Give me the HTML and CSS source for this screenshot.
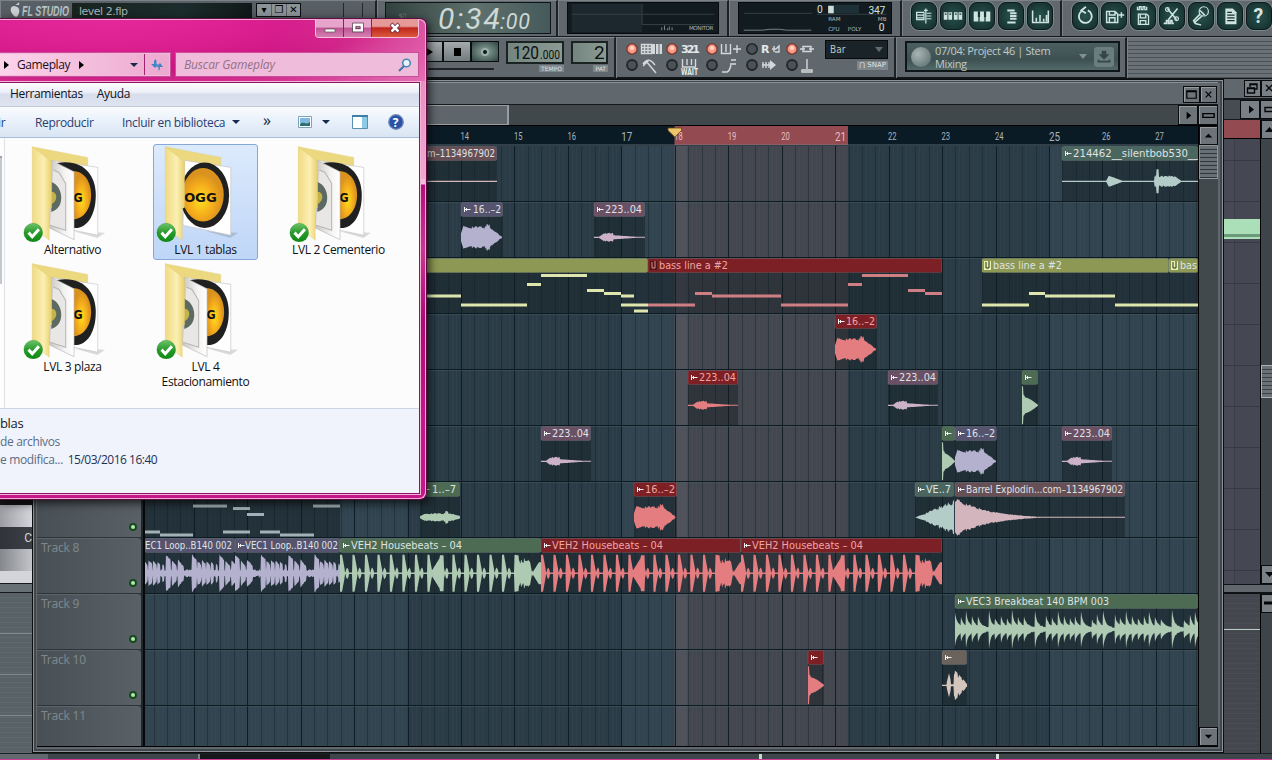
FILE: index.html
```html
<!DOCTYPE html>
<html lang="es">
<head>
<meta charset="utf-8">
<title>FL Studio - level 2.flp</title>
<link rel="stylesheet" href="styles.css">
</head>
<body>
<svg class="defs" aria-hidden="true">
  <defs>
    <linearGradient id="flap" x1="0" x2="1"><stop offset="0" stop-color="#f0da84"/><stop offset=".6" stop-color="#fbefb2"/><stop offset="1" stop-color="#e8cf6c"/></linearGradient>
    <radialGradient id="gold" cx=".45" cy=".6"><stop offset="0" stop-color="#ffe01e"/><stop offset=".6" stop-color="#f5ac1c"/><stop offset="1" stop-color="#d9921e"/></radialGradient>
    <linearGradient id="green" x1="0" y1="0" x2="0" y2="1"><stop offset="0" stop-color="#6cc46a"/><stop offset=".5" stop-color="#2a9a2c"/><stop offset="1" stop-color="#0c8a12"/></linearGradient>
    <linearGradient id="sheet" x1="0" x2="1"><stop offset="0" stop-color="#c9c5c2"/><stop offset=".6" stop-color="#f3f2f1"/><stop offset="1" stop-color="#fff"/></linearGradient>
    <symbol id="back" viewBox="0 0 250 290">
      <path d="M150 258L245 262 222 278z" fill="#0002"/>
      <path d="M27 5L193 37V72L85 60z" fill="#ecd97f" stroke="#dcc86c"/>
      <path d="M85 46L223 67V270L80 240z" fill="#fff" stroke="#c4c4c4" stroke-width="2"/>
    </symbol>
    <symbol id="front" viewBox="0 0 250 290">
      <path d="M27 5L85 50 85 187 78 190V285L27 245z" fill="url(#flap)" stroke="#dfc86a"/>
      <circle cx="30" cy="262" r="28" fill="url(#green)" stroke="#14801a"/>
      <path d="M16 262l11 12 20-22" fill="none" stroke="#fff" stroke-width="9"/>
    </symbol>
    <symbol id="folder-many" viewBox="0 0 250 290">
      <use href="#back"/>
      <path d="M100 54C180 40 217 90 217 150S190 252 150 248z" fill="#202021"/>
      <path d="M152 78C190 82 203 120 203 150S188 218 152 222z" fill="url(#gold)"/>
      <text x="150" y="170" class="ogg" textLength="28" lengthAdjust="spacingAndGlyphs">G</text>
      <path d="M85 46L152 80V283L78 248z" fill="url(#sheet)" stroke="#bbb" stroke-width="2"/>
      <path d="M90 75L107 82 127 115V255L80 240" fill="#e9e7e5" stroke="#b8b6b3" stroke-width="3"/>
      <path d="M84 110c38 15 42 80 0 90v-16c-12-8 14-20 0-44z" fill="#5c6a61"/>
      <path d="M84 140c18 0 22 25 0 38z" fill="#c3b34b"/>
      <use href="#front"/>
    </symbol>
    <symbol id="folder-one" viewBox="0 0 250 290">
      <use href="#back"/>
      <ellipse cx="145" cy="150" rx="73" ry="98" fill="#202021"/>
      <ellipse cx="140" cy="149" rx="62" ry="80" fill="url(#gold)"/>
      <text x="83" y="169" class="ogg" textLength="98" lengthAdjust="spacingAndGlyphs">OGG</text>
      <use href="#front"/>
    </symbol>
  </defs>
</svg>

<div class="desktop">
  <header class="toolbar">
    <div class="row row-top">
      <div class="cell brand">
        <svg class="fruit" viewBox="0 0 12 17"><path d="M5 4C0 4 0 9 2 12s5 6 7 2 2-9-4-10zM6 3L10 0v3z" fill="#c9d0d2"/></svg>
        <svg class="logo" viewBox="0 0 50 18"><text x="0" y="14.500" textLength="47" lengthAdjust="spacingAndGlyphs">FL STUDIO</text></svg>
        <span class="project">level 2.flp</span>
        <span class="mini"><i>▾</i><i>❐</i><i>✕</i></span>
        <span class="ticks"></span>
      </div>
      <div class="cell"><svg class="lcd" viewBox="0 0 164 32"><text x="8" y="16" class="lcd-tiny">s▯</text><text x="50" y="28" class="time" textLength="66">0:34</text><text x="116" y="28" class="time small" textLength="32">:00</text></svg></div>
      <div class="cell monitor-cell"><svg class="screen" viewBox="0 0 154 32"><path d="M1 1h75v30H1z" fill="#1d282e"/><path d="M76 1v22M76 12h77M1 12h75M76 23h77" stroke="#354249" stroke-width="1"/><path d="M97 29v-3m3 3v-5m3 5v-2m2 2v-4m3 4v-3" stroke="#829097"/><text x="126" y="29" class="pixel" textLength="26">MONITOR</text></svg></div>
      <div class="cell monitor-cell"><svg class="screen" viewBox="0 0 154 32"><path d="M1 11h73M79 12h74" stroke="#354249"/><path d="M1 29h20l8-1h10l8 1h26" stroke="#7b898d" fill="none"/><text x="79" y="11" class="num">0</text><path d="M91 2h33v9h-33z" fill="#1e3038"/><path d="M91 3h6v8h-6z" fill="#cfdcd9"/><text x="134" y="12" class="num" textLength="18">347</text><text x="91" y="19" class="pixel">RAM</text><text x="144" y="19" class="pixel">MB</text><text x="91" y="30" class="pixel">CPU</text><text x="112" y="30" class="pixel">POLY</text><text x="145" y="30" class="num">0</text></svg></div>
      <div class="cell buttons">
        <svg class="rb" viewBox="0 0 26 28"><path d="M5 10h8v8H5zM5 13h8M5 16h8M15 6v16M13 8h4M16 11h5M16 14h5M16 17h5"/></svg>
        <svg class="rb" viewBox="0 0 26 28"><path class="f" d="M3 10h4v8H3zM8 10h4v8H8zM14 10h4v8h-4zM19 10h4v8h-4z"/><path d="M4 12h2M9 12h2M15 12h2M20 12h2" stroke="#16332f"/></svg>
        <svg class="rb" viewBox="0 0 26 28"><path class="f" d="M4 9h5v11H4zM10.500 9h5v11h-5zM17 9h5v11h-5z"/><path d="M9.700 9v6M16.300 9v6" stroke="#16332f" stroke-width="2.400"/></svg>
        <svg class="rb" viewBox="0 0 26 28"><path d="M9 8h8M12 11h7M12 14h7M12 17h7M9 21h9" stroke-width="2"/></svg>
        <svg class="rb" viewBox="0 0 26 28"><path d="M5 8v13h17V8M9 20v-4M13 20v-7M17 20v-3M20 20v-7" stroke-width="1.7"/></svg>
      </div>
      <div class="cell buttons">
        <svg class="rb" viewBox="0 0 26 28"><path d="M9 9a7 7 0 1 0 7-1M14 4l-5 4 5 3" stroke-width="2"/></svg>
        <svg class="rb" viewBox="0 0 26 28"><path d="M5 9h9l3 3v9H5zM8 9v4h6V9M8 21v-5h6v5M18 13h6M21 10v6" stroke-width="1.6"/></svg>
        <svg class="rb" viewBox="0 0 26 28"><path d="M7 4v3h2V4h2v3h2V4h2v3h2V4M8 12h9l2 2v9H8zM10 12v4h6v-4M10 23v-4h6v4" stroke-width="1.4"/></svg>
        <svg class="rb" viewBox="0 0 26 28"><path d="M8 6l10 12M19 6L9 18M4 22h3v-3h2v3h2v-3h2v3h2" stroke-width="1.7"/><circle cx="8" cy="7" r="2"/><circle cx="18" cy="17" r="2"/></svg>
        <svg class="rb" viewBox="0 0 26 28"><circle cx="16" cy="9" r="5"/><path d="M12 8l5 5M12 12L5 19l1 2 8-7M6 21c2 3 5 1 7 3" stroke-width="1.7"/></svg>
        <svg class="rb" viewBox="0 0 26 28"><path class="f" d="M8 6h8l4 4v13H8z"/><path d="M10 10h5M10 13h8M10 16h8M10 19h8" stroke="#16332f"/></svg>
        <svg class="rb" viewBox="0 0 26 28"><text x="7" y="22" class="q">?</text></svg>
      </div>
    </div>
    <div class="row row-low">
      <div class="cell transport">
        <span class="btn play"><svg viewBox="0 0 12 12"><path d="M2 1l8 5-8 5z"/></svg></span><span class="btn stop"><b></b></span><span class="btn rec"><b></b></span>
        <div class="meter"><svg class="readout" viewBox="0 0 54 19"><text x="5" y="16" class="seg" textLength="26" lengthAdjust="spacingAndGlyphs">120</text><text x="32" y="16" class="seg s" textLength="20" lengthAdjust="spacingAndGlyphs">.000</text></svg><small>TEMPO</small></div>
        <div class="meter"><svg class="readout pat" viewBox="0 0 33 19"><text x="21" y="16" class="seg">2</text></svg><small>PAT</small></div>
        <span class="slider"></span>
      </div>
      <div class="cell switches">
        <svg class="leds" id="leds" viewBox="0 0 200 38">
          <g class="icons">
            <path d="M17.500 4.500h10v9h-10zM17 7.500h10M17 10.500h10M20.500 5v8M24 5v8"/>
            <path d="M97.500 4v9.500h9V4M102 4v8M109 9h8M113 5v8"/>
            <path d="M151 12h4V6l-3 3M148 9h4M150 6v6"/>
            <path d="M179 6.500h8v5h-8zM176 9h5M185 9h5"/>
            <path d="M19 24c5-7 9-3 12 1M22 21l10 12M19 26l6-6" stroke-width="2.200"/>
            <path d="M58.500 19v8h13v-8M63 19v6M67.500 19v6"/>
            <path d="M98 32h5c3-1 3-4 4-7M106 24h6M107 20h5" stroke-width="2.200"/>
            <path d="M139 22v6M142 22v6M145 22v6M138 25h10" /><path class="solid" d="M146 20l6 5-6 5z"/>
            <path d="M183 19v10M178 30h10v2h-10z" stroke-width="2"/>
          </g>
          <path class="solid" d="M28 4h3v10h-3zM32 4h2.500v10H32zM35.500 4H38v10h-2.500z"/>
          <text x="57" y="13" class="bt" textLength="19">321</text><text x="137" y="13" class="bt">R</text><text x="57" y="35" class="bt w" textLength="17" lengthAdjust="spacingAndGlyphs">WAIT</text>
        </svg>
        <div class="snap"><span class="dropdown">Bar<i></i></span><small>⋂ SNAP</small></div>
      </div>
      <div class="cell newscell"><div class="news"><b class="orb"></b><span>07/04: Project 46 | Stem<br>Mixing</span><i></i><svg viewBox="0 0 22 22"><path d="M11 4v5" stroke="#35474a" stroke-width="5"/><path d="M5 8h12l-6 6z" fill="#35474a"/><path d="M5 14v2h12v-2" stroke="#35474a" stroke-width="2" fill="none"/></svg></div></div>
      <div class="cell hatch"></div>
    </div>
  </header>

  <section class="window keys-window">
    <div class="k shade"></div><div class="k white"></div><div class="k note">C</div><div class="k white2"></div><div class="k split"></div><div class="k lanes"></div>
  </section>

  <section class="window side-window">
    <div class="side-title"><span><svg viewBox="0 0 15 15"><path d="M5 6V3h7v5h-3M2.500 7h7v5h-7zM2.500 7.500h7M5 3.500h7"/></svg></span><span><svg viewBox="0 0 15 15"><path d="M4 4l6 6M10 4l-6 6"/></svg></span></div>
    <div class="side-nav"><span><svg viewBox="0 0 15 15"><path class="solid-dark" d="M6 3.500l5 4-5 4z"/></svg></span><span><svg viewBox="0 0 15 15"><path d="M2 5.500h11v4H2z"/></svg></span></div>
    <div class="side-body">
      <div class="side-roll"><div class="side-ruler"></div><div class="side-note"></div></div>
      <div class="side-scroll"><span><svg viewBox="0 0 15 15"><path class="solid-dark" d="M3 10l4.500-5 4.500 5z"/></svg></span><b></b><span><svg viewBox="0 0 15 15"><path class="solid-dark" d="M3 5l4.500 5 4.500-5z"/></svg></span></div>
    </div>
    <div class="side-split"></div>
    <div class="side-low"><div class="side-lane"></div><div class="side-scroll"><span><svg viewBox="0 0 15 15"><path d="M2 7h11" stroke-width="3"/></svg></span></div></div>
  </section>

  <section class="window playlist">
    <div class="pl-title"><span class="sq"><svg viewBox="0 0 16 16"><path d="M3 4h10v8H3zM3 5h10" fill="none" stroke="#000" stroke-width="1.300"/></svg></span><span class="sq"><svg viewBox="0 0 16 16"><path d="M5 5l6 6M11 5l-6 6" stroke="#000" stroke-width="1.300"/></svg></span></div>
    <div class="pl-nav"><div class="thumb"></div><div class="track"></div><span class="sq"><svg viewBox="0 0 16 16"><path d="M6 4l5 4-5 4z"/></svg></span><span class="sq"><svg viewBox="0 0 16 16"><path d="M2 6h12v4H2z" fill="none" stroke="#000" stroke-width="1.500"/></svg></span></div>
    <div class="pl-body">
      <div class="heads" id="heads"></div>
      <div class="gutter"></div>
      <div class="canvas">
        <svg class="ruler" id="ruler" viewBox="145 126 1053 20"></svg>
        <svg class="grid" id="grid" viewBox="145 146 1053 600"></svg>
      </div>
      <div class="pl-scroll"><span class="sq"><svg viewBox="0 0 16 16"><path d="M4 10l4-4 4 4z"/></svg></span><b></b><u></u><span class="sq"><svg viewBox="0 0 16 16"><path d="M4 6l4 4 4-4z"/></svg></span></div>
    </div>
  </section>

  <div class="bottom-strip"><span></span><span class="dark"></span><i></i><em></em></div>

  <section class="window explorer">
    <div class="ex-title"><div class="caption"><span class="min"><svg viewBox="0 0 16 12"><path d="M3 7h10v3H3z" fill="#fff" stroke="#555" stroke-width=".7"/></svg></span><span class="max"><svg viewBox="0 0 16 12"><path d="M4 2.500h8v6H4z" fill="none" stroke="#fff" stroke-width="2.500"/><path d="M2.500 1h11v9h-11zM6 4.500h4v2H6z" fill="none" stroke="#444" stroke-width=".7"/></svg></span><span class="close"><svg viewBox="0 0 16 12"><path d="M4 2l8 8M12 2l-8 8" stroke="#623" stroke-width="4"/><path d="M4.500 2.500l7 7M11.500 2.500l-7 7" stroke="#fff" stroke-width="2.500"/></svg></span></div></div>
    <div class="ex-address">
      <div class="path"><i class="ra"></i><span>Gameplay</span><i class="ra"></i><i class="da"></i><b><svg viewBox="0 0 14 14"><path d="M5.500 1L4 3v3H1l4 4 3-4H6.500V3zM8.500 13l1.500-2V9h3l-3-4-4 4h2.500v1z" fill="#3f86c4"/></svg></b></div>
      <div class="search"><span>Buscar Gameplay</span><svg viewBox="0 0 14 14"><circle cx="8.500" cy="5" r="3.800" fill="#e7f4fb" stroke="#4e83b4" stroke-width="1.600"/><path d="M6 8l-5 5" stroke="#3f74a8" stroke-width="2"/></svg></div>
    </div>
    <div class="ex-inner">
      <div class="menu"><span>Herramientas</span><span>Ayuda</span></div>
      <div class="cmds"><span class="c0">ir</span><span class="c1">Reproducir</span><span class="c2">Incluir en biblioteca</span><i class="da"></i><span class="c3">»</span>
        <svg class="pic" viewBox="0 0 14 12"><path d="M.5.5h13v11H.5z" fill="#fff" stroke="#7da3bb"/><path d="M2 2h10v5H2z" fill="#7fb9e3"/><path d="M2 8c3-3 6 1 10-2v4H2z" fill="#2f6f6f"/></svg><i class="da"></i>
        <svg class="pane" viewBox="0 0 16 14"><path d="M.5.5h15v13H.5z" fill="#fff" stroke="#5b8fae"/><path d="M10 1h5v12h-5z" fill="#8ccbe5"/><path d="M0 1h16" stroke="#3f7ea6" stroke-width="2"/></svg>
        <svg class="help" viewBox="0 0 16 16"><circle cx="8" cy="8" r="7.300" fill="#2a53a8" stroke="#7a8fb8" stroke-width="1.200"/><text x="4.800" y="12.500">?</text></svg></div>
      <div class="files"><div class="navbar"></div><div class="list">
        <div class="file"><svg><use href="#folder-many"/></svg><span>Alternativo</span></div>
        <div class="file sel"><svg><use href="#folder-one"/></svg><span>LVL 1 tablas</span></div>
        <div class="file"><svg><use href="#folder-many"/></svg><span>LVL 2 Cementerio</span></div>
        <div class="file"><svg><use href="#folder-many"/></svg><span>LVL 3 plaza</span></div>
        <div class="file"><svg><use href="#folder-many"/></svg><span>LVL 4<br>Estacionamiento</span></div>
      </div></div>
      <div class="details"><p class="d1">blas</p><p class="d2">de archivos</p><p class="d3">e modifica... <b>15/03/2016 16:40</b></p></div>
    </div>
  </section>
</div>
<script src="playlist.js"></script>
</body>
</html>
```

FILE: styles.css
```css
* { box-sizing: border-box; }
body { margin: 0; background: #5d656b; font-family: "Open Sans", "Noto Sans", sans-serif; }
.defs { position: absolute; width: 0; height: 0; }
.desktop { position: relative; width: 1272px; height: 760px; overflow: hidden; background: #596167; }
.window { position: absolute; }
.ogg { font: bold 38px "DejaVu Sans", sans-serif; fill: #17130c; }

/* toolbar */
.toolbar { height: 79px; background: #60686e; border-bottom: 2px solid #111518; }
.row { display: grid; }
.row-top { height: 37px; grid-template-columns: 377px 181px 171px 173px 160px 1fr; border-bottom: 1px solid #14181b; }
.row-low { height: 40px; grid-template-columns: 616px 280px 231px 1fr; }
.cell { border-right: 2px solid #1b2024; border-top: 1px solid #7b8388; padding: 0 8px; display: flex; align-items: flex-start; box-shadow: inset 1px 0 #7b8388; }
.brand { padding: 0 0 0 10px; background: linear-gradient(#596167, #4c5358); }
.brand > * { flex: none; }
.fruit { width: 11px; height: 16px; margin-top: 1px; }
.logo { width: 50px; height: 18px; margin-left: 1px; overflow: visible; font: italic bold 14px "Liberation Sans", sans-serif; fill: #b9c3c7; }
.project { width: 180px; height: 16px; margin-top: 2px; padding-left: 7px; background: linear-gradient(90deg, #17231f, #1c2c2c 60%, #0f1818); color: #a6b3b6; font: 11px/17px "DejaVu Sans", sans-serif; letter-spacing: -.5px; }
.mini { display: flex; margin: 2px 0 0 4px; border: 1px solid #0a0d0f; }
.mini i { width: 14px; height: 12px; margin-right: 1px; background: #8a9398; font: 10px/12px "DejaVu Sans", sans-serif; text-align: center; }
.mini i:last-child { margin: 0; width: 13px; }
.ticks { width: 20px; height: 14px; margin: 2px 0 0 42px; border: solid #22282c; border-width: 0 1px; }
.lcd { flex: none; width: 166px; height: 32px; margin-top: 1px; border: 1px solid #101618; background: linear-gradient(90deg, #32423f, #5f716d 55%, #46595a); }
.lcd-tiny { font: 8px "DejaVu Sans"; fill: #748683; }
.time { font: italic 32px Roboto, sans-serif; fill: #cdd9d6; }
.time.small { font-size: 23px; }
.monitor-cell { padding-left: 9px; }
.screen { width: 154px; height: 32px; margin-top: 1px; background: #121b20; border: 1px solid #080b0d; }
.pixel { font: 6px "DejaVu Sans", sans-serif; fill: #a9b6ba; }
.num { font: 11px Roboto, sans-serif; fill: #d5e2df; }
.buttons { gap: 3px; padding: 1px 0 0 9px; }
.rb { flex: none; width: 26px; height: 28px; border-radius: 8px; background: radial-gradient(#27534e, #17322f 85%); border: 1px solid #0d1a19; box-shadow: 0 0 0 1px #77898a; fill: none; stroke: #cfe3e0; stroke-width: 1.3; }
.rb .f { fill: #cfe3e0; stroke: none; }
.q { font: bold 21px Roboto, sans-serif; fill: #d8e6e4; stroke: none; }
.cell.buttons + .buttons { border-right: 0; padding-left: 10px; }

.transport { padding: 3px 0 0 415px; position: relative; border-top-color: #818a8f; }
.btn { width: 28px; height: 21px; border: 1px solid #0b0e0f; background: linear-gradient(#a3abac, #727b7d); display: grid; place-items: center; }
.btn svg { width: 12px; }
.stop b { width: 7px; height: 8px; background: #000; }
.rec { background: radial-gradient(#8ea79f, #2f4340); }
.rec b { width: 4px; height: 4px; border-radius: 3px; background: #101817; box-shadow: 0 0 0 2px #9bb0aa; }
.meter { margin-left: 7px; display: flex; flex-direction: column; align-items: flex-end; }
.meter small, .snap small { margin-top: 1px; padding: 0 2px; background: #7e868b; color: #dde2e4; font: 6px/7px "DejaVu Sans", sans-serif; }
.readout { width: 58px; height: 23px; background: linear-gradient(90deg, #74857f, #8b9b94); border: 2px solid #1a2222; }
.readout.pat { width: 37px; }
.seg { font: 19px Roboto, sans-serif; fill: #0b1010; }
.seg.s { font-size: 13px; }
.slider { position: absolute; left: 428px; top: 30px; width: 66px; height: 2px; background: #1e2427; }
.switches { padding: 2px 0 0 8px; }
.leds { width: 200px; height: 38px; flex: none; }
.icons path { fill: none; stroke: #d3d8da; stroke-width: 1.4; }
.leds .solid { fill: #d3d8da; stroke: none; }
.bt { font: bold 11px "DejaVu Sans", sans-serif; fill: #e4e8ea; }
.bt.w { font-size: 8px; }
.snap { display: flex; flex-direction: column; align-items: flex-end; margin-left: 1px; }
.dropdown { width: 63px; height: 19px; padding: 0 4px; border: 1px solid #080a0b; background: #1a2328; color: #bac3c6; font: 10px/16px "DejaVu Sans Condensed", "DejaVu Sans", sans-serif; display: flex; justify-content: space-between; align-items: center; }
.dropdown i, .news i { border: 4px solid transparent; border-top: 5px solid #5e6b70; border-bottom: 0; }
.snap small { margin-top: 2px; font-size: 7px; line-height: 9px; }
.newscell { padding: 3px 0 0 9px; }
.news { width: 215px; height: 31px; border: 2px solid #0f1617; background: linear-gradient(#4c5f60, #3e5051 60%, #52696a); display: flex; align-items: center; color: #bfcac9; font: 11px/13px "Open Sans", sans-serif; letter-spacing: -.38px; }
.news .orb { width: 20px; height: 20px; margin: 0 4px 0 4px; border-radius: 50%; background: radial-gradient(circle at 35% 35%, #a9b5b3, #54686a); }
.news span { width: 144px; }
.news i { border-top-color: #82918f; margin-right: 7px; }
.news svg { width: 20px; height: 20px; background: #6b7d7d; border-radius: 3px; }
.hatch { border-right: 0; background: repeating-linear-gradient(#697176 0 3px, #4b5358 3px 4px); }

/* window behind, left */
.keys-window { left: 0; top: 499px; width: 32px; height: 261px; display: flex; flex-direction: column; }
.shade { height: 6px; background: #151515; }
.white { height: 22px; background: linear-gradient(90deg, #9b9da3, #d4d5db); }
.note { height: 22px; background: linear-gradient(90deg, #30343a, #3c4046); color: #ced3d6; text-align: right; font: 12px/22px Roboto, sans-serif; }
.white2 { height: 34px; background: linear-gradient(90deg, #84878b, #c2c4c9); border-bottom: 12px solid #d3d5da; }
.split { height: 10px; background: #667075; border: solid #15191b; border-width: 1px 0; }
.lanes { flex: 1; background: repeating-linear-gradient(transparent 0 40px, #7f888d 40px 41px), repeating-linear-gradient(#596267 0 4px, #5f686d 4px 5px); }

/* window behind, right */
.side-window { left: 1224px; top: 79px; width: 48px; height: 674px; display: flex; flex-direction: column; overflow: hidden; background: #60686e; }
.side-title { height: 21px; padding: 1px 0 0 20px; display: flex; border-bottom: 2px solid #15191c; }
.side-nav { height: 20px; padding-left: 16px; display: flex; background: #454d52; border-bottom: 1px solid #15191c; }
.side-window span { flex: none; width: 17px; height: 17px; background: #798187; border: 1px solid #0a0c0d; display: grid; place-items: center; overflow: hidden; }
.side-window svg { width: 15px; height: 15px; fill: none; stroke: #050607; stroke-width: 1.4; }
.side-window .solid-dark { fill: #050607; stroke: none; }
.side-window .side-nav span { width: 20px; height: 19px; }
.side-body { display: flex; height: 464px; }
.side-roll { flex: none; width: 37px; background: repeating-linear-gradient(transparent 0 40px, #373a42 40px 41px), linear-gradient(90deg, #474954 10px, #3b3e46 10px 11px, #454852 11px); border-right: 1px solid #000; }
.side-ruler { height: 19px; background: #934a50; border-bottom: 1px solid #000; }
.side-note { height: 20px; margin-top: 80px; background: linear-gradient(#aadfb8 75%, #6b9a7b 75% 88%, #aadfb8 88%); }
.side-scroll { flex: 1; display: flex; flex-direction: column; background: #3e454a; }
.side-window .side-scroll span { height: 19px; }
.side-scroll b { height: 33px; margin: 226px 0 auto; background: repeating-linear-gradient(#6a7277 0 3px, #3b4246 3px 4px); border: 1px solid #aab0b3; }
.side-split { height: 10px; background: #60686e; border: solid #101315; border-width: 1px 0 2px; }
.side-low { flex: 1; display: flex; }
.side-lane { flex: none; width: 37px; border-right: 1px solid #000; background: linear-gradient(transparent 35px, #b9cfc4 35px 36px, transparent 36px), repeating-linear-gradient(#45474f 0 4px, #4a4c55 4px 5px); }

/* playlist */
.playlist { left: 32px; top: 79px; width: 1192px; height: 674px; padding: 2px 5px 5px 4px; background: #60686e; border: 1px solid #0b0d0f; box-shadow: inset 0 0 0 1px #8a9297, inset 0 0 0 3px #41484d; display: flex; flex-direction: column; }
.sq { flex: none; width: 19px; height: 19px; display: grid; place-items: center; background: #6c7479; border: 1px solid #0a0c0d; box-shadow: inset 1px 1px #959da1; }
.sq svg { width: 15px; height: 15px; }
.pl-title { flex: none; height: 23px; display: flex; justify-content: flex-end; padding: 3px 1px 0 0; border-bottom: 1px solid #15191b; border-top: 1px solid #8a9297; }
.pl-title .sq { width: 17px; height: 17px; }
.pl-nav { flex: none; height: 21px; display: flex; background: #41484d; border-bottom: 1px solid #000; }
.thumb { width: 472px; background: #5e666b; border: 1px solid #959da1; border-right-width: 2px; }
.track { flex: 1; background: #40484c; }
.pl-nav .sq { width: 20px; height: 20px; }
.pl-body { flex: none; height: 621px; display: flex; border-bottom: 1px solid #000; }
.heads { width: 104px; padding-top: 20px; background: #3a4146; overflow: hidden; }
.head { height: 56px; padding: 1px 4px 0; border-bottom: 1px solid #2d3438; border-top: 1px solid #5d656a; border-radius: 0 4px 0 0; background: linear-gradient(90deg, #485056, #596166); color: #7d868b; font: 12px/16px "Noto Sans", sans-serif; letter-spacing: -.2px; position: relative; }
.head i { position: absolute; right: 4px; bottom: 6px; width: 8px; height: 8px; border-radius: 4px; background: #b7e5b5; border: 2.5px solid #174a1b; }
.gutter { width: 4px; background: #20282c; border-right: 2px solid #05090c; }
.canvas { width: 1053px; flex: none; display: flex; flex-direction: column; }
.ruler { flex: none; height: 20px; width: 1053px; }
.grid { flex: none; height: 600px; width: 1053px; }
.rn { font: 10px Roboto, sans-serif; fill: #aab5ba; }
.rn.big { font-size: 13px; }
.rn.on { fill: #e3bfc0; }
.ct { font: 10.5px "DejaVu Sans Condensed", "DejaVu Sans", sans-serif; }
.pl-scroll { width: 20px; border-left: 1px solid #000; display: flex; flex-direction: column; background: #41494d; }
.pl-scroll b { height: 34px; border: 1px solid #8d9599; background: repeating-linear-gradient(#687075 0 3px, #30373b 3px 4px); }
.pl-scroll u { flex: 1; }

.bottom-strip { position: absolute; left: 0; top: 753px; width: 1272px; height: 7px; display: flex; background: #3e464b; border-bottom: 1px solid #cf3a94; border-top: 1px solid #1b2022; }
.bottom-strip span { width: 200px; border-right: 2px solid #7d8589; border-left: 48px solid #626a6f; }
.bottom-strip .dark { width: 130px; border: 0; background: #15191c; }
.bottom-strip i { width: 3px; margin-left: 429px; background: #bfe0c9; }
.bottom-strip em { width: 3px; margin-left: 234px; background: #d5e5dd; }

/* explorer */
.explorer { left: 0; top: 18px; width: 427px; height: 482px; border: solid #5e0c41; border-width: 1px 1px 1px 0; border-radius: 0 7px 7px 0; box-shadow: inset -1px 1px #f4a9d5, inset -1px -1px #f4a9d5, 2px 3px 10px #000b; background: linear-gradient(100deg, transparent 60%, #f28ac322 75%, #ee91c488) 0 0 / 100% 160px no-repeat, radial-gradient(ellipse at 25% 0, #e4289b 0, #dd2091 30%, #cb1580 60%, #db51a2 100%) 0 0 / 100% 62px no-repeat, linear-gradient(#e48cbf 60px, #efc3dc 165px, #b01078 166px, #c83892 230px, #ab0c75 300px, #c3188a 400px); }
.ex-title { height: 33px; display: flex; justify-content: flex-end; padding-right: 7px; }
.caption { display: flex; height: 19px; border: 1px solid #f8c0df; border-top: 0; border-radius: 0 0 4px 4px; overflow: hidden; }
.caption span { width: 28px; display: grid; place-items: center; background: linear-gradient(#e8a5cb 45%, #bd5592 50%, #d57fb2); border-right: 1px solid #7a2a5c; }
.caption .close { width: 46px; background: linear-gradient(#e59a98 40%, #c0261c 50%, #da5a3c); border: 0; }
.caption svg { width: 16px; height: 12px; }
.ex-address { height: 30px; display: flex; gap: 6px; padding-top: 1px; }
.path, .search { height: 23px; border: 1px solid #f8b7dc; outline: 1px solid #c4529a; outline-offset: 0; display: flex; align-items: center; font-size: 12px; letter-spacing: -.4px; color: #1b1017; }
.path { width: 170px; border-left: 0; padding-left: 4px; background: linear-gradient(90deg, #fbd4ea, #eda9d0); }
.ra { border: 4px solid transparent; border-left: 5px solid #000; border-right: 0; }
.path span { margin: 0 9px 0 8px; width: 53px; }
.da { border: 4px solid transparent; border-top: 4px solid #182a4c; border-bottom: 0; }
.path .da { margin-left: 46px; }
.path b { margin-left: 6px; height: 21px; width: 25px; border-left: 1px solid #a2226e; display: grid; place-items: center; }
.path b svg { width: 14px; height: 14px; }
.search { width: 242px; padding: 0 5px 0 7px; justify-content: space-between; font-style: italic; letter-spacing: -.15px; color: #927286; background: #f0bcdb; }
.search svg { width: 14px; height: 14px; }
.ex-inner { width: 420px; height: 412px; border: 1px solid #8c1460; border-left: 0; outline: 1px solid #f7b4d8; background: #fcfcfd; display: flex; flex-direction: column; font-size: 12px; letter-spacing: -.35px; }
.menu { height: 24px; padding-left: 10px; display: flex; gap: 14px; line-height: 21px; color: #10121c; background: linear-gradient(#fdfdfe, #eceff8 40%, #d8ddec 50%, #dfe4f1); border-bottom: 1px solid #c0c8dc; }
.cmds { height: 31px; display: flex; align-items: center; color: #28406f; background: linear-gradient(#fafcfe, #e8f0fa 50%, #d9e5f3); border-bottom: 1px solid #a9bbd5; }
.c0 { width: 35px; margin-left: -2px; }
.cmds .c1 { width: 87px; margin-left: 2px; }
.c2 { width: 106px; margin-right: 4px; letter-spacing: -.3px; white-space: nowrap; }
.c3 { font-size: 16px; width: 10px; margin: -4px 25px 0 23px; color: #111c38; }
.pic { width: 14px; height: 12px; margin-right: 10px; }
.pane { width: 16px; height: 14px; margin-left: 22px; }
.help { width: 16px; height: 16px; margin-left: 20px; }
.help text { font: bold 12px "Open Sans", sans-serif; fill: #fff; }
.files { height: 271px; display: flex; border-bottom: 1px solid #ccd6e4; }
.navbar { width: 5px; border-right: 1px solid #dfe3e8; background: linear-gradient(#fff 18px, #9da1a7 18px 20px, #c4c7cb 20px 146px, #fff 146px) 0 0 / 2px 100% no-repeat; }
.list { display: grid; grid-template-columns: repeat(3, 105px); grid-auto-rows: 116px; gap: 1px 28px; padding: 6px 0 0 15px; align-content: start; }
.file { display: flex; flex-direction: column; align-items: center; white-space: nowrap; text-align: center; line-height: 15px; color: #111; border: 1px solid transparent; }
.file svg { width: 84px; height: 97px; align-self: flex-start; margin-left: 2px; flex: none; }
.file.sel { border-color: #84a9d9; border-radius: 3px; background: linear-gradient(#dceafc, #bfd6f7); }
.details { flex: 1; padding-top: 5px; background: #f0f3fb; color: #5a6c84; }
.details p { margin: 0; }
.d1 { font-size: 13px; line-height: 19px; color: #16181c; }
.d2, .d3 { line-height: 18px; }
.d3 { letter-spacing: -.35px; }
.details b { font-weight: 400; color: #1c3255; margin-left: 2px; letter-spacing: -.5px; }
```

FILE: playlist.js
```javascript
const NS = 'http://www.w3.org/2000/svg';
function add(parent, tag, attrs, text) {
  const el = document.createElementNS(NS, tag);
  for (const k in attrs) el.setAttribute(k, attrs[k]);
  if (text !== undefined) el.textContent = text;
  parent.appendChild(el);
  return el;
}
const BAR = 53.45;
const barX = n => 461 + (n - 14) * BAR;
const rowY = n => 146 + (n - 1) * 56;
const SEL = [674.5, 848];

const leds = document.getElementById('leds');
[[8, 1], [48, 1], [88, 1], [128, 0], [168, 1]].forEach(([x, on]) => {
  add(leds, 'circle', { cx: x, cy: 9, r: 5.2, fill: on ? '#ff9b84' : '#4a5257', stroke: on ? '#7a4038' : '#20262a', 'stroke-width': 1.6 });
  if (on) add(leds, 'circle', { cx: x, cy: 8, r: 2, fill: '#ffd9cc' });
  add(leds, 'circle', { cx: x, cy: 25, r: 5, fill: '#4a5257', stroke: '#20262a', 'stroke-width': 1.8 });
});

const heads = document.getElementById('heads');
for (let i = 1; i <= 11; i++) {
  const d = document.createElement('div');
  d.className = 'head';
  if (i >= 8) d.textContent = 'Track ' + i;
  d.appendChild(document.createElement('i'));
  heads.appendChild(d);
}

const ruler = document.getElementById('ruler');
add(ruler, 'rect', { x: 145, y: 126, width: 1053, height: 20, fill: '#0b1b26' });
add(ruler, 'rect', { x: SEL[0], y: 126, width: SEL[1] - SEL[0], height: 19, fill: '#934a50' });
for (let b = 14; b <= 27; b++) {
  const big = b % 4 === 1, on = b >= 18 && b <= 21;
  add(ruler, 'text', { x: b === 21 ? 835 : barX(b) + (big ? 0 : -.5), y: big ? 140.5 : 139.5, textLength: big ? 11 : 8.5, lengthAdjust: 'spacingAndGlyphs', class: 'rn' + (big ? ' big' : '') + (on ? ' on' : '') }, b);
}
add(ruler, 'path', { d: 'M145 145h1053', stroke: '#7c888e', 'stroke-width': .7 });
add(ruler, 'path', { d: 'M668 128h13.500v2.500l-6.700 6.500-6.800-6.500z', fill: '#eec567', stroke: '#5f4516', 'stroke-width': .8 });

const grid = document.getElementById('grid');
add(grid, 'rect', { x: 145, y: 146, width: 1053, height: 600, fill: '#2b3c47' });
[9, 17, 25].forEach(b => {
  const x = b === 9 ? 145 : barX(b);
  add(grid, 'rect', { x, y: 146, width: barX(b + 4) - x, height: 600, fill: '#31444f' });
});
add(grid, 'rect', { x: SEL[0], y: 146, width: SEL[1] - SEL[0], height: 600, fill: '#44474f' });
add(grid, 'rect', { x: SEL[0], y: 146, width: 13, height: 600, fill: '#4f515b' });
for (let i = -24; i < 56; i++) {
  const x = Math.round(barX(14) + i * BAR / 4) + .5;
  const major = i % 4 === 0;
  add(grid, 'path', { d: `M${x} 146v600`, stroke: major ? '#0b1a23' : '#17262f', 'stroke-width': 1, opacity: major ? .9 : .5 });
  for (let j = 1; j < 3; j++) add(grid, 'path', { d: `M${x + j * 4} 146v600`, stroke: '#4c6672', opacity: .12 });
}
for (let t = 2; t <= 11; t++) {
  add(grid, 'path', { d: `M145 ${rowY(t) - .5}h1053`, stroke: '#0c1a22' });
  add(grid, 'path', { d: `M145 ${rowY(t) + .5}h1053`, stroke: '#52656e', opacity: .35 });
}

const colors = {
  rose: ['#674f56', '#d3b6bd'], teal: ['#4a665f', '#b4ccc7'], purple: ['#55536d', '#b4b1cf'],
  mauve: ['#695065', '#ccb2c8'], red: ['#7d2025', '#e37d80'], green: ['#4d6a52', '#aecab3'],
  olive: ['#8c9853', '#dfe6ad'], brown: ['#6b625c', '#d4c6bd'], gray: ['#4d5961', '#a3b0b6']
};
const noise = i => { const v = Math.sin(Math.floor(i) * 127.1) * 43758.5453; return v - Math.floor(v); };

/* Each envelope takes a position in pixels and the clip width and returns the half height. */
const envelopes = {
  flat: () => .6,
  hit: (p, w) => p < 1.5 ? 19 : p < 3 ? 12 - p : Math.max(0, 8 * Math.cos((p / w) * 1.57) + .4),
  voice: (p, w) => { const u = p / w; return u < .06 ? 4 + u * 130 : u < .12 ? 10 + noise(p) : u < .7 ? 8.5 + noise(p) * 3 + (Math.abs(u - .64) < .04 ? 3 : 0) : Math.max(0, 9.5 * (1 - u) / .3 - noise(p)); },
  puff: (p, w) => { const u = p / w; return u < .1 ? .6 : u < .2 ? (u - .1) * 35 + .6 : u < .38 ? 3 + noise(p) * 1.6 : Math.max(.5, 3.4 * (1 - u * 1.02)); },
  shot: (p, w) => { const u = p / w; return 1 + (u < .6 ? 2.8 : 3) * Math.sin(Math.min(1, u * 5) * 1.5) * (1 - Math.pow(u, 8)) * (.7 + noise(p) * .5) + (Math.abs(u - .67) < .04 ? 2.5 : 0); },
  silent: p => p > 44 && p < 64 ? (p < 47 ? (p - 44) * 2 : Math.max(.6, 5.5 * (1 - (p - 47) / 15))) : p > 92 && p < 120 ? (p > 94 && p < 97 ? 12 : p < 113 ? 4 + noise(p) * 2 : (120 - p) * .7) : .6,
  rise: (p, w) => Math.pow(p / w, 1.1) * 13 + noise(p) * 6 * p / w,
  boom: (p, w) => Math.max(.5, 17 * Math.exp(-p / 38) - 1.5 + noise(p) * 5 * Math.exp(-p / 28)),
  loop: p => {
    const q = p % 53.5;
    const hits = [[0, 18, 5], [6, 12, 5], [12, 13, 6], [26, 18, 5], [31.5, 12, 4], [36, 13, 4], [40.5, 12, 4], [45, 11, 3], [50, 9, 2]];
    let a = 2 + noise(p);
    hits.forEach(([at, h, l]) => { if (q >= at && q < at + l) a = h - (q - at) * 1.1; });
    return a + noise(p) * 1.2;
  },
  house: p => {
    if (p > 92 && p < 104) return p < 100 ? 3 + (p - 92) * 1.6 : 18;
    if (p > 176 && p < 190) return p < 179 ? 18 : 9 + noise(p) * 6;
    if (p >= 193) return Math.min(11, (p - 192) * 1.6);
    const q = p % 12.45;
    return q < 2.5 ? 18.5 : q < 5 ? 16 - (q - 2.5) * 5.5 : q < 5.7 ? 1 : q < 8.7 ? 6 - Math.abs(q - 7.2) * 2 : .7;
  },
  /* Hit onsets as [x, height]; each one decays over a low bed. */
  breakbeat: p => {
    const hits = [[0, 17], [6, 12], [11, 18], [17, 13], [23, 13], [34, 19], [40, 11], [46, 13], [52, 11], [57, 19], [63, 12], [69, 13], [80, 18], [91, 14], [97, 12], [103, 18], [109, 13], [115, 11], [120, 13], [126, 18], [137, 9], [142, 15], [148, 19], [160, 14], [165, 12], [171, 18], [177, 13], [183, 11], [189, 13], [194, 18], [200, 12], [206, 10], [217, 19], [229, 9], [235, 14], [240, 18]];
    let last = hits[0];
    for (const h of hits) if (h[0] <= p) last = h;
    const q = p - last[0];
    return (last[1] - 7) * Math.exp(-q / 1.6) + 7 * Math.exp(-q / 7) + noise(p);
  },
  burst: p => p < 5 ? .6 : p < 9 ? 12 - Math.abs(p - 7) * 4 : p < 12 ? 1 : Math.max(0, 16 - (p - 12) * 1.1) * (p % 4 < 1 ? .7 : 1)
};

const clips = [
  [1, 345, 497, 'rose', 'm–1134967902', 'flat', 427, 68],
  [1, 1062, 1198, 'teal', '214462__silentbob530__', 'silent', 1073, 125],
  [2, 461, 503, 'purple', '16..–2', 'voice', 473, 28],
  [2, 594, 645, 'mauve', '223..04', 'puff', 605, 37],
  [4, 835, 877, 'red', '16..–2', 'voice', 846, 29],
  [5, 688, 738, 'red', '223..04', 'puff', 699, 37],
  [5, 888, 938, 'mauve', '223..04', 'puff', 899, 37],
  [5, 1022, 1038, 'green', '', 'hit'],
  [6, 541, 591, 'mauve', '223..04', 'puff', 552, 37],
  [6, 942, 955, 'green', '', 'hit'],
  [6, 955, 997, 'purple', '16..–2', 'voice', 966, 29],
  [6, 1062, 1112, 'mauve', '223..04', 'puff', 1073, 37],
  [7, 420, 460, 'green', '1..–7', 'shot', 432, 24],
  [7, 634, 677, 'red', '16..–2', 'voice', 645, 30],
  [7, 915, 954, 'teal', 'VE..7', 'rise', 926, 25],
  [7, 955, 1125, 'rose', 'Barrel Explodin...com–1134967902', 'boom', 966, 157],
  [8, 145, 235, 'purple', 'EC1 Loop..B140 002', 'loop', 145, 87],
  [8, 235, 340, 'purple', 'VEC1 Loop..B140 002', 'loop', 245, 93],
  [8, 340, 541, 'green', 'VEH2 Housebeats – 04', 'house', 351, 111],
  [8, 541, 741, 'red', 'VEH2 Housebeats – 04', 'house', 552, 111],
  [8, 741, 942, 'red', 'VEH2 Housebeats – 04', 'house', 752, 111],
  [9, 955, 1198, 'green', 'VEC3 Breakbeat 140 BPM 003', 'breakbeat', 966, 143],
  [10, 808, 824, 'red', '', 'hit'],
  [10, 942, 967, 'brown', '', 'burst']
];

function clipBase(row, x1, x2, color) {
  const y = rowY(row), w = x2 - x1;
  add(grid, 'rect', { x: x1, y: y + 14, width: w, height: 41, fill: '#141d22', opacity: .45 });
  add(grid, 'rect', { x: x1, y: y + .5, width: w - .5, height: 14, rx: 1.5, fill: colors[color][0], stroke: '#ffffff', 'stroke-opacity': .12, 'stroke-width': .8 });
  return y;
}
function label(x, y, text, width, color) {
  add(grid, 'text', { x, y: y + 11, class: 'ct', textLength: width, lengthAdjust: 'spacingAndGlyphs', fill: color === 'red' ? '#f0a5a4' : '#dfe3e4' }, text);
}
clips.forEach(([row, x1, x2, color, text, env, tx, tw]) => {
  const y = clipBase(row, x1, x2, color), w = x2 - x1, mid = y + 35.3;
  if (x1 > 145) add(grid, 'path', { d: `M${x1 + 3.5} ${y + 5}v5M${x1 + 3.5} ${y + 7.5}h6M${x1 + 5.5} ${y + 6}v3`, stroke: '#eef1f1', fill: 'none' });
  if (text) label(tx, y, text, tw, color);
  const pts = [], low = [];
  for (let p = 0; p <= w; p += .5) {
    const a = envelopes[env](env === 'loop' && x1 === 145 ? p + 32.7 : p, w);
    pts.push(`${x1 + p},${(mid - a).toFixed(1)}`);
    low.unshift(`${x1 + p},${(mid + a).toFixed(1)}`);
  }
  add(grid, 'polygon', { points: pts.concat(low).join(' '), fill: colors[color][1] });
});

/* Pattern clips: bars and their notes as [x1, x2, y]. */
const patterns = [
  [3, 300, 648, 'olive', '', [[427, 461, 296], [461, 527, 305], [527, 541, 284.5], [541, 587, 275.5], [587, 604, 290.5], [604, 621, 293.5], [621, 634, 296], [621, 648, 305], [634, 648, 311]]],
  [3, 648, 942, 'red', 'bass line a #2', [[648, 695, 305], [695, 712, 293.5], [712, 781, 296], [781, 848, 305], [848, 862, 284.5], [862, 908, 275.5], [908, 925, 290.5], [925, 942, 293.5]]],
  [3, 982, 1169, 'olive', 'bass line a #2', [[982, 1029, 305], [1029, 1045, 293.5], [1045, 1115, 296], [1115, 1169, 305]]],
  [3, 1169, 1198, 'olive', 'bas', [[1169, 1198, 305]]],
  [7, 145, 340, 'gray', '', [[145, 160, 532], [160, 193, 535], [193, 227, 506], [223, 250, 532], [233, 250, 508.5], [247, 264, 514.5], [260, 280, 532], [280, 314, 535], [313, 340, 506]]]
];
patterns.forEach(([row, x1, x2, color, text, notes]) => {
  const y = clipBase(row, x1, x2, color);
  if (text) {
    const on = color === 'red' ? '#e58d8c' : '#e6efad';
    add(grid, 'path', { d: `M${x1 + 2} ${y + 3}h7v9h-7z`, fill: color === 'red' ? '#4c1518' : on });
    add(grid, 'path', { d: `M${x1 + 4} ${y + 4}v6h3v-7`, stroke: color === 'red' ? on : '#273014', fill: 'none' });
    label(x1 + 11, y, text, text === 'bas' ? 17 : 69, color);
  }
  notes.forEach(([a, b, ny]) => add(grid, 'rect', { x: a, y: ny - 1.5, width: b - a, height: 3, fill: color === 'red' ? '#cf7e84' : colors[color][1] }));
});
```
